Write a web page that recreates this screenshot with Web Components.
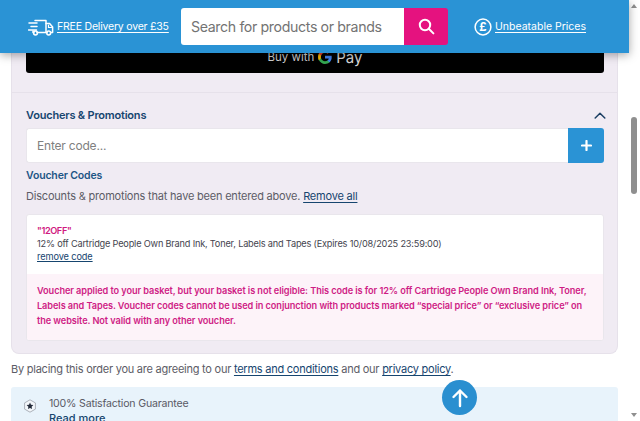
<!DOCTYPE html>
<html lang="en">
<head>
<meta charset="utf-8">
<title>Basket</title>
<style>
  html, body { margin: 0; height: 421px; overflow: hidden; background: #fff; }
  body { font-family: Inter, "Liberation Sans", sans-serif; color: #4a4a55; }
</style>
</head>
<body>
<cp-page>
  <cp-header slot="header"></cp-header>
  <cp-voucher-panel>
    <cp-pay-button></cp-pay-button>
    <cp-voucher-form></cp-voucher-form>
    <cp-voucher-card code="12OFF" detail="12% off Cartridge People Own Brand Ink, Toner, Labels and Tapes (Expires 10/08/2025 23:59:00)">
      Voucher applied to your basket, but your basket is not eligible: This code is for 12% off Cartridge People Own Brand Ink, Toner, Labels and Tapes. Voucher codes cannot be used in conjunction with products marked “special price” or “exclusive price” on the website. Not valid with any other voucher.
    </cp-voucher-card>
  </cp-voucher-panel>
  <cp-terms></cp-terms>
  <cp-guarantee></cp-guarantee>
  <cp-top-button slot="overlay"></cp-top-button>
</cp-page>

<script>
function define(name, html) {
  customElements.define(name, class extends HTMLElement {
    constructor() {
      super();
      this.attachShadow({ mode: 'open' });
      const t = document.createElement('template');
      t.innerHTML = html;
      this.shadowRoot.appendChild(t.content.cloneNode(true));
    }
  });
}

define('cp-page', `
  <style>
    :host { display: grid; grid-template-columns: 629px 11px; height: 421px; position: relative; overflow: hidden; }
    main { display: flex; flex-direction: column; padding: 0 11px; height: 421px; overflow: hidden; box-sizing: border-box; }
    .bar { position: relative; background: #fff; }
    .thumb { position: absolute; left: 2px; top: 117px; width: 6px; height: 77px; border-radius: 3px; background: #8f8f8f; }
    .up, .down { position: absolute; left: 2px; width: 0; height: 0; border-left: 3px solid transparent; border-right: 3px solid transparent; }
    .up { top: 4px; border-bottom: 4px solid #8f8f8f; }
    .down { top: 413px; border-top: 4px solid #8f8f8f; }
  </style>
  <main><slot></slot></main>
  <div class="bar"><div class="up"></div><div class="thumb"></div><div class="down"></div></div>
  <slot name="header"></slot>
  <slot name="overlay"></slot>
`);

define('cp-header', `
  <style>
    :host { position: absolute; left: 0; top: 0; width: 629px; height: 53px; background: #2a93d5; box-shadow: 0 2px 9px rgba(0,0,0,.35); display: flex; align-items: center; color: #fff; font-size: 10.5px; }
    a { color: #fff; text-decoration: underline; text-underline-offset: 2px; white-space: nowrap; }
    .deliv { display: flex; align-items: center; gap: 3px; margin-left: 28px; width: 153px; flex: none; letter-spacing: -.2px; }
    .search { display: flex; width: 267px; height: 37px; flex: none; }
    .field { flex: 1; background: #fff; border-radius: 3px 0 0 3px; color: #737373; font-size: 14.2px; letter-spacing: -.38px; display: flex; align-items: center; padding-left: 10px; white-space: nowrap; }
    .go { width: 44px; background: #e5127f; border-radius: 0 3px 3px 0; display: flex; align-items: center; justify-content: center; }
    .price { display: flex; align-items: center; gap: 3px; margin-left: 26px; }
  </style>
  <div class="deliv">
    <svg width="26" height="18" viewBox="0 0 26 18" fill="none" stroke="#fff" stroke-width="1.5" stroke-linecap="round" stroke-linejoin="round">
      <path d="M1 5h8M3 8.5h6M0.5 12h8"/>
      <path d="M7 2.5h11v12H9M5.8 14.5H5V13"/>
      <path d="M18 5.5h3.6l3 3.6v5.4h-2M18 14.5h1"/>
      <circle cx="7.5" cy="15" r="1.9"/><circle cx="20.7" cy="15" r="1.9"/>
      <path d="M20.5 7v2.5h3" stroke-width="1.2"/>
    </svg>
    <a>FREE Delivery over £35</a>
  </div>
  <div class="search">
    <div class="field">Search for products or brands</div>
    <div class="go">
      <svg width="17" height="17" viewBox="0 0 17 17" fill="none" stroke="#fff" stroke-width="2" stroke-linecap="round"><circle cx="7" cy="7" r="5.2"/><path d="M10.8 10.8l4.6 4.6"/></svg>
    </div>
  </div>
  <div class="price">
    <svg width="18" height="18" viewBox="0 0 18 18"><circle cx="9" cy="9" r="7.9" fill="none" stroke="#fff" stroke-width="1.5"/><text x="9" y="13" text-anchor="middle" font-family="Inter, sans-serif" font-size="11.5" font-weight="700" fill="#fff">£</text></svg>
    <a>Unbeatable Prices</a>
  </div>
`);

define('cp-voucher-panel', `
  <style>
    :host { display: block; flex: none; height: 354px; box-sizing: border-box; background: #f0ebf3; border: 1px solid #e6e1ea; border-top: 0; border-radius: 0 0 8px 8px; padding: 30px 13px 0 14px; }
  </style>
  <slot></slot>
`);

define('cp-pay-button', `
  <style>
    :host { display: flex; height: 43px; box-sizing: border-box; padding-top: 11px; justify-content: center; align-items: center; gap: 4px; background: #000; border-radius: 3px; color: #d0d0d0; font-size: 11.5px; margin-bottom: 19px; }
    .pay { font-size: 15px; color: #d8d8d8; }
  </style>
  <span>Buy with</span>
  <svg width="14" height="14" viewBox="0 0 24 24">
    <path fill="#4285f4" d="M23.5 12.3c0-.9-.1-1.600-.2-2.300H12v4.500h6.500c-.3 1.500-1.100 2.700-2.400 3.500v3h3.800c2.300-2.100 3.600-5.200 3.600-8.700z"/>
    <path fill="#34a853" d="M12 24c3.200 0 6-1.100 7.900-2.900l-3.800-3c-1.100.7-2.400 1.100-4.100 1.100-3.100 0-5.800-2.100-6.700-5H1.300v3.100C3.300 21.300 7.300 24 12 24z"/>
    <path fill="#fbbc04" d="M5.300 14.200c-.5-1.500-.5-3 0-4.500V6.600H1.300c-1.700 3.300-1.700 7.500 0 10.800l4-3.200z"/>
    <path fill="#ea4335" d="M12 4.800c1.800 0 3.300.6 4.600 1.800l3.400-3.400C17.900 1.200 15.200 0 12 0 7.300 0 3.300 2.700 1.300 6.600l4 3.100c.9-2.800 3.600-4.900 6.700-4.900z"/>
  </svg>
  <span class="pay">Pay</span>
`);

define('cp-voucher-form', `
  <style>
    :host { display: block; border-top: 1px solid #e6e1ea; margin: 0 -13px 0 -14px; padding: 15px 13px 0 14px; }
    .title { display: flex; justify-content: space-between; align-items: center; height: 14px; font-size: 11px; letter-spacing: -.2px; font-weight: 600; color: #16456f; margin-bottom: 6px; }
    .title svg { margin-right: -2px; }
    .row { display: flex; height: 35px; box-sizing: border-box; }
    .field { flex: 1; background: #fff; border: 1px solid #e9e6ec; border-right: 0; border-radius: 3px 0 0 3px; display: flex; align-items: center; padding-left: 10px; font-size: 12px; letter-spacing: -.2px; color: #808080; }
    .add { width: 36px; background: #2a93d5; border-radius: 0 3px 3px 0; display: flex; align-items: center; justify-content: center; }
    h3 { margin: 6px 0 0; font-size: 10.5px; letter-spacing: -.15px; line-height: 14px; font-weight: 600; color: #1d5585; }
    p { margin: 6px 0 10px; font-size: 11px; letter-spacing: -.2px; line-height: 15px; color: #5c5c66; }
    a { color: #16456f; text-decoration: underline; text-underline-offset: 2px; }
  </style>
  <div class="title"><span>Vouchers &amp; Promotions</span>
    <svg width="12" height="7" viewBox="0 0 12 7" fill="none" stroke="#1c3f63" stroke-width="1.500" stroke-linecap="round" stroke-linejoin="round"><path d="M1.200 6L6 1.200 10.800 6"/></svg>
  </div>
  <div class="row">
    <div class="field">Enter code...</div>
    <div class="add"><svg width="11" height="11" viewBox="0 0 11 11" stroke="#fff" stroke-width="2.200" stroke-linecap="round"><path d="M5.500 1v9M1 5.500h9"/></svg></div>
  </div>
  <h3>Voucher Codes</h3>
  <p>Discounts &amp; promotions that have been entered above. <a>Remove all</a></p>
`);

customElements.define('cp-voucher-card', class extends HTMLElement {
  constructor() {
    super();
    this.attachShadow({ mode: 'open' });
    this.shadowRoot.innerHTML = `
      <style>
        :host { display: block; background: #fff; border: 1px solid #e9e6ec; border-radius: 3px; overflow: hidden; box-sizing: border-box; height: 127px; }
        .top { height: 59px; box-sizing: border-box; padding: 9px 10px 0; font-size: 9.200px; line-height: 13px; color: #44444e; }
        .code { color: #d01a7f; font-weight: 600; letter-spacing: -.4px; }
        .detail { letter-spacing: -.19px; }
        a { color: #16456f; text-decoration: underline; text-underline-offset: 1px; display: block; letter-spacing: -.1px; }
        .msg { background: #fdf3f9; height: 67px; box-sizing: border-box; padding: 9px 10px 0; font-size: 9.200px; letter-spacing: -.08px; line-height: 15px; font-weight: 600; color: #cf1d85; }
      </style>
      <div class="top">
        <div class="code"></div>
        <div class="detail"></div>
        <a>remove code</a>
      </div>
      <div class="msg"><slot></slot></div>`;
  }
  connectedCallback() {
    this.shadowRoot.querySelector('.code').textContent = '"' + this.getAttribute('code') + '"';
    this.shadowRoot.querySelector('.detail').textContent = this.getAttribute('detail');
  }
});

define('cp-terms', `
  <style>
    :host { display: block; flex: none; margin-top: 8px; font-size: 11px; letter-spacing: -.24px; line-height: 15px; color: #5c5c66; }
    a { color: #16456f; text-decoration: underline; text-underline-offset: 2px; }
  </style>
  By placing this order you are agreeing to our <a>terms and conditions</a> and our <a>privacy policy</a>.
`);

define('cp-guarantee', `
  <style>
    :host { display: flex; flex: none; margin-top: 10px; height: 60px; box-sizing: border-box; background: #e8f3fb; border-radius: 3px 3px 0 0; padding: 10px 0 0 12px; gap: 12px; font-size: 10.6px; letter-spacing: -.2px; line-height: 14px; color: #5a5a66; }
    a { color: #16456f; font-weight: 500; display: block; font-size: 11px; letter-spacing: 0; }
    svg { margin-top: 2px; flex: none; }
  </style>
  <svg width="14" height="14" viewBox="0 0 14 14"><path d="M7 .8l5.400 3.100v6.200L7 13.200 1.600 10.100V3.900z" fill="#f3f7fb" stroke="#9aa0a8" stroke-width=".8"/><path d="M7 3.600l1 2.200 2.400.3-1.800 1.600.5 2.400L7 8.900l-2.100 1.200.5-2.400-1.800-1.600 2.400-.3z" fill="#232b3a"/></svg>
  <div>100% Satisfaction Guarantee<a>Read more</a></div>
`);

define('cp-top-button', `
  <style>
    :host { position: absolute; left: 442px; top: 380px; width: 35px; height: 35px; border-radius: 50%; background: #2a8fd0; display: flex; align-items: center; justify-content: center; }
  </style>
  <svg width="18" height="20" viewBox="0 0 18 20" fill="none" stroke="#fff" stroke-width="2.400" stroke-linecap="round" stroke-linejoin="round"><path d="M9 18V2.500M2.500 9L9 2.500 15.500 9"/></svg>
`);
</script>
</body>
</html>
